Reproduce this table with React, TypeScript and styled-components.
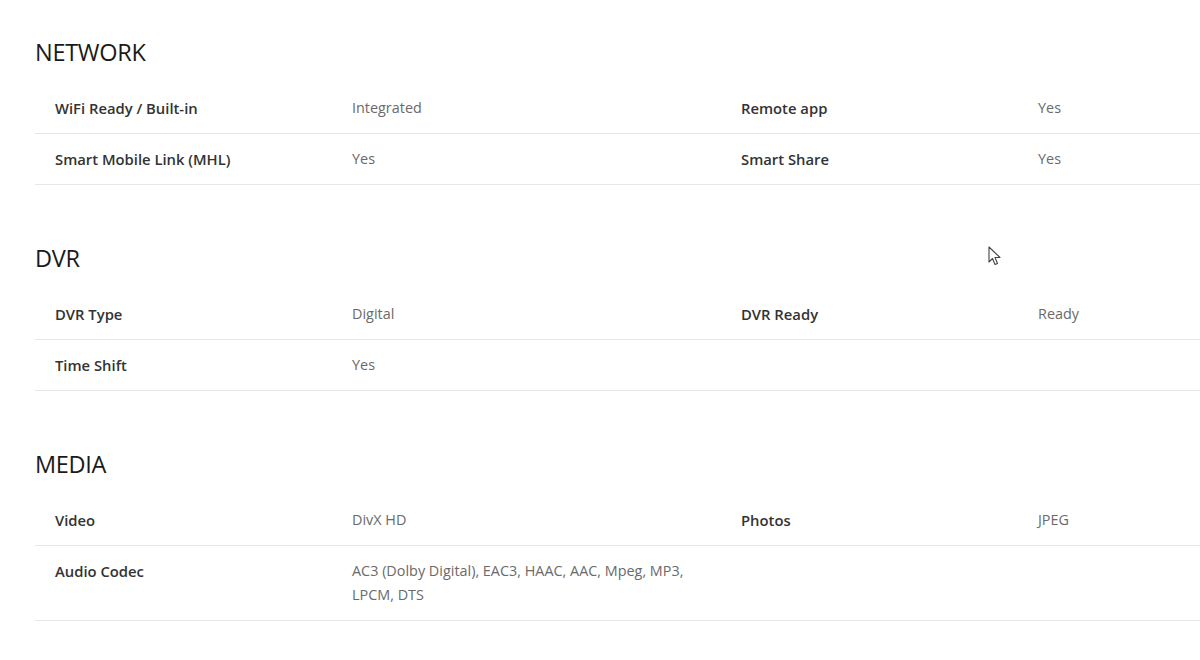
import styled, { createGlobalStyle } from "styled-components";

const GlobalStyle = createGlobalStyle`
  html, body {
    margin: 0;
    padding: 0;
    background: #fff;
  }
  body {
    font-family: "Open Sans", "Liberation Sans", sans-serif;
    color: #222;
  }
`;

type Spec = [string, string];

interface Group {
  title: string;
  rows: Spec[][];
}

const groups: Group[] = [
  {
    title: "NETWORK",
    rows: [
      [
        ["WiFi Ready / Built-in", "Integrated"],
        ["Remote app", "Yes"],
      ],
      [
        ["Smart Mobile Link (MHL)", "Yes"],
        ["Smart Share", "Yes"],
      ],
    ],
  },
  {
    title: "DVR",
    rows: [
      [
        ["DVR Type", "Digital"],
        ["DVR Ready", "Ready"],
      ],
      [["Time Shift", "Yes"]],
    ],
  },
  {
    title: "MEDIA",
    rows: [
      [
        ["Video", "DivX HD"],
        ["Photos", "JPEG"],
      ],
      [["Audio Codec", "AC3 (Dolby Digital), EAC3, HAAC, AAC, Mpeg, MP3, LPCM, DTS"]],
    ],
  },
];

const Page = styled.div`
  position: relative;
  padding: 38px 0 0 35px;
`;

const Section = styled.section`
  margin-bottom: 59px;
`;

const Title = styled.h2`
  margin: 0 0 17px;
  font-size: 23.5px;
  line-height: 28px;
  font-weight: 400;
  color: #1a1a1a;
  letter-spacing: -0.3px;
`;

const Row = styled.div`
  display: grid;
  grid-template-columns: 317px 369px 317px 1fr;
  border-bottom: 1px solid #e6e6e6;
  padding: 13px 0 13px;
`;

const Label = styled.div`
  padding-left: 20px;
  font-size: 14.8px;
  line-height: 24px;
  font-weight: 600;
  color: #333;
`;

const Value = styled.div`
  font-size: 14.4px;
  line-height: 24px;
  font-weight: 400;
  color: #6a6a6a;
  padding-right: 30px;
`;

const Cursor = styled.svg`
  position: absolute;
  left: 988px;
  top: 246px;
`;

const App = (): JSX.Element => {
  return (
    <>
      <GlobalStyle />
      <Page>
        {groups.map((group) => (
          <Section key={group.title}>
            <Title>{group.title}</Title>
            {group.rows.map((row, idx) => (
              <Row key={`${group.title}_${idx}`}>
                {row.map(([label, value]) => (
                  <>
                    <Label key={`l_${label}`}>{label}</Label>
                    <Value key={`v_${label}`}>{value}</Value>
                  </>
                ))}
              </Row>
            ))}
          </Section>
        ))}
        <Cursor width="14" height="22" viewBox="0 0 14 22">
          <path
            d="M1 1 L1 16 L4.5 12.5 L7 18.5 L9.5 17.5 L7 11.5 L12 11.5 Z"
            fill="#fff"
            stroke="#444"
            strokeWidth="1.1"
            strokeLinejoin="round"
          />
        </Cursor>
      </Page>
    </>
  );
};

export default App;
